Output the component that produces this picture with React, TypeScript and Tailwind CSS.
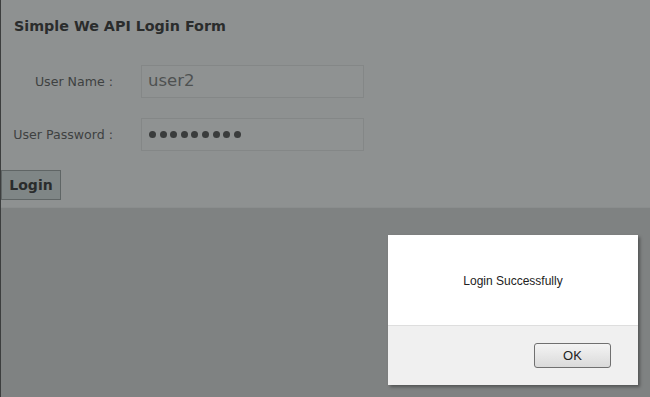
import React from 'react';

const App: React.FC = () => {
    return (
        <div className="relative h-[397px] w-[650px] overflow-hidden border-l border-[#3c3e3e] bg-[#7f8282] font-['DejaVu_Sans',sans-serif]">
            {/* form area */}
            <div className="h-[208px] border-b border-[#8a8d8d] bg-[#8e9191]">
                <h1 className="pl-[13px] pt-[16px] text-[14.3px] font-bold leading-[20px] text-[#2a2c2c]">
                    Simple We API Login Form
                </h1>

                <div className="mt-[29px] flex flex-col gap-[20px]">
                    <div className="flex items-center">
                        <label className="w-[112px] pt-[2px] text-right text-[12.6px] text-[#3e4141]">User Name :</label>
                        <div className="ml-[28px] flex h-[33px] w-[223px] items-center border border-[#848787] bg-[#8f9292] px-[6px] text-[16.5px] text-[#4e5151]">
                            user2
                        </div>
                    </div>
                    <div className="flex items-center">
                        <label className="w-[112px] pt-[2px] text-right text-[12.6px] text-[#3e4141]">User Password :</label>
                        <div className="ml-[28px] flex h-[33px] w-[223px] items-center gap-[3.6px] border border-[#848787] bg-[#8f9292] px-[7px]">
                            {Array.from({ length: 9 }).map((_, i) => (
                                <span key={i} className="h-[7px] w-[7px] rounded-full bg-[#3a3c3c]" />
                            ))}
                        </div>
                    </div>
                </div>

                <button className="mt-[19px] h-[30px] w-[60px] border border-[#5f6565] bg-[#7f8686] text-[14px] font-bold text-[#2a2c2c]">
                    Login
                </button>
            </div>

            {/* alert dialog */}
            <div className="absolute left-[387px] top-[235px] w-[250px] bg-white shadow-[2px_2px_3px_rgba(0,0,0,0.35)] font-['Liberation_Sans',Arial,sans-serif]">
                <div className="flex h-[90px] items-center justify-center pt-[2px] text-[12px] text-[#222]">
                    Login Successfully
                </div>
                <div className="flex h-[60px] items-center justify-end border-t border-[#dedede] bg-[#f0f0f0] pr-[27px]">
                    <button className="h-[25px] w-[77px] rounded-[3px] border border-[#707070] bg-gradient-to-b from-[#f4f4f4] to-[#dadada] text-[13px] text-[#222]">
                        OK
                    </button>
                </div>
            </div>
        </div>
    );
};

export default App;
